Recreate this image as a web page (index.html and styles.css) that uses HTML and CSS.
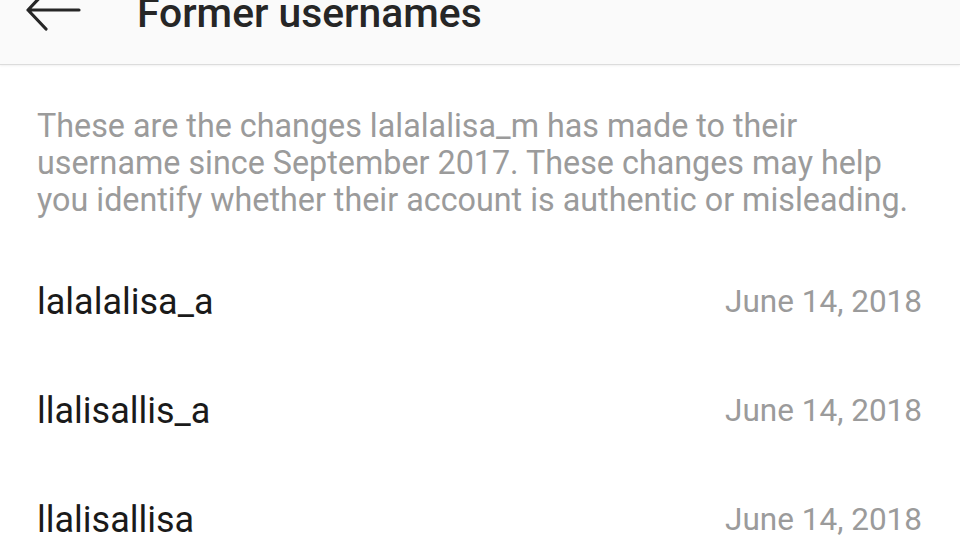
FILE: index.html
```html
<!DOCTYPE html>
<html>
<head>
    <meta charset='utf-8'>
    <title>Former usernames</title>
    <link rel="stylesheet" href="styles.css">
</head>
<body>
    <div class="header">
        <svg class="back" width="60" height="50" viewBox="0 0 60 50">
            <path d="M54 17 H3 M21 -2 L3 17 L21 36" fill="none" stroke="#262626" stroke-width="3.2" stroke-linecap="round" stroke-linejoin="round"/>
        </svg>
        <h1 class="title">Former usernames</h1>
    </div>
    <div class="content">
        <p class="note">These are the changes lalalalisa_m has made to their username since September 2017. These changes may help you identify whether their account is authentic or misleading.</p>
        <div class="list">
            <div class="row">
                <span class="name">lalalalisa_a</span>
                <span class="date">June 14, 2018</span>
            </div>
            <div class="row">
                <span class="name">llalisallis_a</span>
                <span class="date">June 14, 2018</span>
            </div>
            <div class="row">
                <span class="name">llalisallisa</span>
                <span class="date">June 14, 2018</span>
            </div>
        </div>
    </div>
</body>
</html>
```

FILE: styles.css
```css
html,body,div,p,h1{
    padding: 0;
    margin: 0;
}
html,body{
    height: 100%;
    overflow: hidden;
}
body{
    background: #fff;
    font-family: Roboto, "Noto Sans", sans-serif;
}
.header{
    height: 64px;
    background: #fafafa;
    border-bottom: 1px solid #dcdcdc;
    box-shadow: 0 1px 2px rgba(0,0,0,0.06);
    display: flex;
    align-items: flex-start;
    overflow: hidden;
}
.header .back{
    margin: -7px 0 0 25px;
    flex: none;
}
.header .title{
    margin: -7px 0 0 52px;
    font-size: 40.8px;
    line-height: 40px;
    font-weight: 500;
    color: #262626;
}
.content{
    padding: 0 38px 0 37px;
}
.note{
    margin-top: 43px;
    font-size: 32.3px;
    line-height: 37px;
    color: #9b9b9b;
}
.list{
    margin-top: 28px;
}
.row{
    height: 109px;
    display: flex;
    justify-content: space-between;
    align-items: center;
}
.row .name{
    font-size: 36px;
    color: #1a1a1a;
}
.row .date{
    font-size: 31.5px;
    color: #9b9b9b;
}
```
